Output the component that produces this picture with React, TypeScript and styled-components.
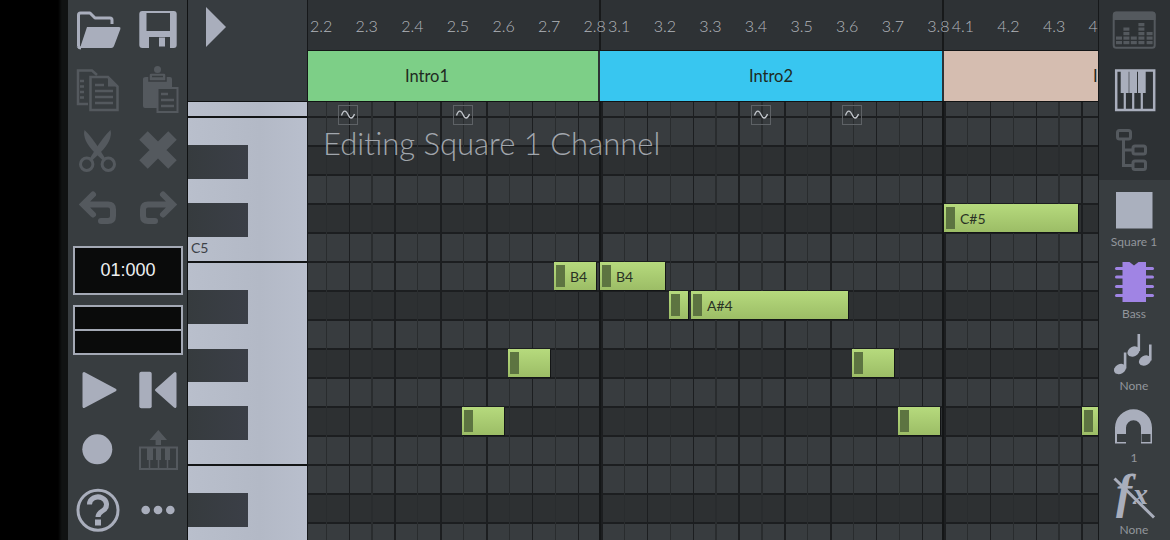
import React from "react";
import styled, { createGlobalStyle } from "styled-components";

const ICON = "#a9aebc";
const DIM = "#54595e";
const SIDE_BG = "#383d40";
const STEP = 22.9;

const GlobalStyle = createGlobalStyle`
  html, body {
    margin: 0;
    padding: 0;
    background: #000;
    overflow: hidden;
  }
  body {
    font-family: "Lato", "Noto Sans", sans-serif;
  }
`;

const PageEl = styled.div`
  display: flex;
  width: 1170px;
  height: 540px;
  overflow: hidden;
`;

const GutterEl = styled.div`
  width: 68px;
  flex: none;
  background: linear-gradient(90deg, #000 0, #000 58px, #101212 62px);
`;

const ToolbarEl = styled.div`
  width: 119px;
  flex: none;
  background: ${SIDE_BG};
  border-right: 1px solid #101213;
  display: flex;
  flex-direction: column;
`;

const ToolGridEl = styled.div`
  display: grid;
  grid-template-columns: 60px 60px;
  grid-auto-rows: 60px;
  width: 120px;
`;

const ToolIconEl = styled.svg`
  display: block;
  width: 60px;
  height: 60px;
`;

const TimerEl = styled.div`
  box-sizing: border-box;
  margin: 6px 0 0 5px;
  width: 110px;
  height: 49px;
  background: #0a0b0b;
  border: 2px solid #a4a9b5;
  color: #eef0f2;
  font-family: "Liberation Sans", sans-serif;
  font-size: 18px;
  display: flex;
  align-items: center;
  justify-content: center;
`;

const MeterEl = styled.div`
  box-sizing: border-box;
  margin: 10px 0 5px 5px;
  width: 110px;
  height: 50px;
  background: #0a0b0b;
  border: 2px solid #a4a9b5;
  display: flex;
  flex-direction: column;
  &::after {
    content: "";
    margin-top: 22px;
    height: 2px;
    background: #a4a9b5;
  }
`;

const EditorEl = styled.div`
  flex: 1;
  min-width: 0;
  display: flex;
  flex-direction: column;
`;

const TopRowEl = styled.div`
  display: flex;
  height: 102px;
  flex: none;
`;

const CornerEl = styled.div`
  width: 120px;
  flex: none;
  background: #373c40;
  border-right: 1px solid #16181a;
  border-bottom: 1px solid #101213;
  box-sizing: border-box;
  height: 102px;
  svg {
    display: block;
    margin: 6px 0 0 17px;
  }
`;

const TimelineEl = styled.div`
  flex: 1;
  min-width: 0;
  position: relative;
  overflow: hidden;
  background: #2e3235;
`;

const TicksEl = styled.div`
  position: relative;
  z-index: 1;
  height: 51px;
  box-sizing: border-box;
  padding-left: 2px;
  display: flex;
  align-items: center;
  border-bottom: 1px solid #141617;
  overflow: hidden;
`;

const TickEl = styled.div<{ $narrow?: boolean }>`
  width: ${(p) => (p.$narrow ? 24.5 : 45.6)}px;
  flex: none;
  font-size: 16px;
  font-weight: 300;
  color: #b2b6bc;
  padding-top: 1px;
`;

const TimelineBarEl = styled.div<{ $left: number }>`
  position: absolute;
  top: 0;
  height: 51px;
  left: ${(p) => p.$left}px;
  width: 2px;
  background: #17191a;
`;

const PatternsEl = styled.div`
  display: flex;
  height: 50px;
  border-bottom: 1px solid #101213;
  margin-left: -52px;
`;

const PatternEl = styled.div<{ $color: string }>`
  flex: none;
  width: 342px;
  height: 50px;
  background: ${(p) => p.$color};
  margin-right: 2px;
  display: flex;
  align-items: center;
  justify-content: center;
  font-size: 16.5px;
  color: #1f2a22;
`;

const BodyRowEl = styled.div`
  flex: 1;
  min-height: 0;
  display: flex;
`;

const PianoEl = styled.div`
  width: 119px;
  flex: none;
  display: flex;
  flex-direction: column;
  background: linear-gradient(90deg, #b9bfcc 0, #b3b9c6 60%, #b9bfcd 100%);
  border-right: 1px solid #16181a;
`;

const KeySpanEl = styled.div<{ $height: number; $black?: boolean; $octave?: boolean }>`
  flex: none;
  box-sizing: border-box;
  height: ${(p) => p.$height}px;
  width: ${(p) => (p.$black ? "60px" : "100%")};
  background: ${(p) => (p.$black ? "linear-gradient(90deg, #363b3e, #3b3f47)" : "transparent")};
  border-bottom: ${(p) => (p.$octave ? "2px solid #131516" : "none")};
  color: #3c4147;
  font-size: 14px;
  padding: 0 0 5px 3px;
  display: flex;
  align-items: flex-end;
`;

const GridEl = styled.div`
  flex: 1;
  min-width: 0;
  position: relative;
  overflow: hidden;
  display: flex;
  flex-direction: column;
`;

const GridRowEl = styled.div<{ $height: number; $dark: boolean }>`
  flex: none;
  box-sizing: border-box;
  height: ${(p) => p.$height}px;
  background: ${(p) => (p.$dark ? "#2d3032" : "#383c3f")};
  border-bottom: 2px solid #1c1e20;
`;

const BarsEl = styled.div`
  position: absolute;
  inset: 0;
  display: flex;
  margin-left: -53px;
`;

const BarEl = styled.div`
  flex: none;
  box-sizing: border-box;
  width: ${STEP * 15}px;
  background: repeating-linear-gradient(
    90deg,
    #1c1e20 0,
    #1c1e20 1.6px,
    transparent 1.6px,
    transparent ${STEP}px,
    #292c2e ${STEP}px,
    #292c2e ${STEP + 1.2}px,
    transparent ${STEP + 1.2}px,
    transparent ${STEP * 2}px
  );
  border-left: 2px solid #141617;
`;

const WaveEl = styled.svg`
  position: absolute;
  top: 3px;
  width: 20px;
  height: 20px;
`;

const NoteEl = styled.div`
  position: absolute;
  box-sizing: border-box;
  height: 28px;
  background: linear-gradient(180deg, #b6da7d, #9cbd66);
  box-shadow: 1px 1px 0 #131516;
  color: #2a3225;
  font-size: 14px;
  display: flex;
  align-items: center;
  padding-left: 2px;
  overflow: hidden;
`;

const NoteHandleEl = styled.div`
  flex: none;
  width: 9px;
  height: 22px;
  background: #5d7441;
  margin-right: 5px;
`;

const OverlayTitleEl = styled.div`
  position: absolute;
  left: 15px;
  top: 22px;
  font-size: 31px;
  font-weight: 300;
  color: #aeb3ba;
  white-space: nowrap;
  opacity: 0.9;
`;

const SidePanelEl = styled.div`
  width: 72px;
  flex: none;
  box-sizing: border-box;
  border-left: 1px solid #16181a;
  display: flex;
  flex-direction: column;
  background: ${SIDE_BG};
`;

const SideTopEl = styled.div`
  height: 180px;
  flex: none;
  background: #2d3134;
  svg {
    display: block;
    margin-left: -1px;
  }
`;

const SideItemEl = styled.div`
  height: 72px;
  flex: none;
  display: flex;
  flex-direction: column;
  align-items: center;
  svg {
    display: block;
    margin-left: -1px;
    flex: none;
    overflow: visible;
  }
`;

const SideLabelEl = styled.div`
  height: 16px;
  line-height: 16px;
  font-size: 12px;
  font-weight: 400;
  color: #92969c;
  margin-left: -1px;
`;

const OpenIcon = () => (
  <ToolIconEl viewBox="0 0 60 60">
    <path d="M10.5 46V15q0-2 2-2H22l5 5h15q2 0 2 2v4" fill="none" stroke={ICON} strokeWidth="3" strokeLinejoin="round" />
    <path d="M19 27H51q2 0 1.4 2L46 46q-.7 2-2.7 2H12z" fill={ICON} />
    <path d="M10 46q1 2 3 2" fill="none" stroke={ICON} strokeWidth="3" />
  </ToolIconEl>
);

const SaveIcon = () => (
  <ToolIconEl viewBox="0 0 60 60">
    <rect x="11.3" y="11" width="37.4" height="37" rx="3" fill={ICON} />
    <rect x="18.5" y="13" width="23.5" height="18" fill={SIDE_BG} />
    <rect x="21" y="37" width="21" height="11" fill={SIDE_BG} />
    <rect x="31" y="37.5" width="6" height="9" fill={ICON} />
  </ToolIconEl>
);

const CopyIcon = () => (
  <ToolIconEl viewBox="0 0 60 60">
    <path d="M20 44H10V10.5H24L29 15" fill="none" stroke={DIM} strokeWidth="2.5" />
    <path d="M12 21h4M12 26.5h4M12 32h4M12 37.5h4" stroke={DIM} strokeWidth="2.5" />
    <path d="M22.5 17H40l9.5 9.5V50H22.5z" fill="none" stroke={DIM} strokeWidth="2.5" />
    <path d="M40 17v9.5h9.5z" fill={DIM} />
    <path d="M27 25h9M27 31h18M27 37h18M27 43h18" stroke={DIM} strokeWidth="2.5" />
  </ToolIconEl>
);

const PasteIcon = () => (
  <ToolIconEl viewBox="0 0 60 60">
    <path d="M18 17h24q2 0 2 2V27H29V48H17q-2 0-2-2V19q0-2 3-2z" fill={DIM} />
    <path d="M21 21V15q0-2 2-2H36q2 0 2 2V21z" fill={DIM} stroke={SIDE_BG} strokeWidth="1.5" />
    <circle cx="29.5" cy="9.5" r="3.5" fill={DIM} />
    <path d="M24 16.5H35" stroke={SIDE_BG} strokeWidth="1.5" />
    <rect x="29.5" y="28" width="20" height="24" fill="none" stroke={DIM} strokeWidth="2" />
    <path d="M33 34h7M33 40h13M33 46h13" stroke={DIM} strokeWidth="2.5" />
  </ToolIconEl>
);

const CutIcon = () => (
  <ToolIconEl viewBox="0 0 60 60">
    <circle cx="18.7" cy="44.3" r="6.2" fill="none" stroke={DIM} strokeWidth="3" />
    <circle cx="40.3" cy="44.3" r="6.2" fill="none" stroke={DIM} strokeWidth="3" />
    <path d="M16.5 10Q23 16 32 30L37.5 39L35 40.5L27 33Q14 20 16.5 10z" fill={DIM} />
    <path d="M42.5 10Q36 16 27 30L21.5 39L24 40.5L32 33Q45 20 42.5 10z" fill={DIM} />
  </ToolIconEl>
);

const DeleteIcon = () => (
  <ToolIconEl viewBox="0 0 60 60">
    <path d="M15.5 15.5L44.5 44.5M44.5 15.5L15.5 44.5" stroke={DIM} strokeWidth="12" />
  </ToolIconEl>
);

const undoPath = "M25 14.5L15 24.5L25 34.5M16 24.5H40q5 0 5 5V36q0 5-5 5H33";

const UndoIcon = () => (
  <ToolIconEl viewBox="0 0 60 60">
    <path d={undoPath} fill="none" stroke={DIM} strokeWidth="6" strokeLinecap="round" />
  </ToolIconEl>
);

const RedoIcon = () => (
  <ToolIconEl viewBox="0 0 60 60">
    <path d={undoPath} transform="matrix(-1 0 0 1 60 0)" fill="none" stroke={DIM} strokeWidth="6" strokeLinecap="round" />
  </ToolIconEl>
);

const PlayIcon = () => (
  <ToolIconEl viewBox="0 0 60 60">
    <path d="M16 13.5L47 30L16 46.5z" fill={ICON} stroke={ICON} strokeWidth="3" strokeLinejoin="round" />
  </ToolIconEl>
);

const RewindIcon = () => (
  <ToolIconEl viewBox="0 0 60 60">
    <rect x="11.3" y="11.7" width="12.4" height="36.6" rx="2" fill={ICON} />
    <path d="M47 13.5L28.5 30L47 46.5z" fill={ICON} stroke={ICON} strokeWidth="3" strokeLinejoin="round" />
  </ToolIconEl>
);

const RecordIcon = () => (
  <ToolIconEl viewBox="0 0 60 60">
    <circle cx="29.3" cy="29.3" r="15" fill={ICON} />
  </ToolIconEl>
);

const MidiIcon = () => (
  <ToolIconEl viewBox="0 0 60 60">
    <path d="M30.3 10L39 20H33V25H27.6V20H21.6z" fill={DIM} />
    <rect x="12" y="27.5" width="37" height="21.5" fill="none" stroke={DIM} strokeWidth="2" />
    <path d="M19 28h6v12h-6zM28 28h5v12h-5zM37 28h5v12h-5z" fill={DIM} />
    <path d="M21.5 40v8M30.5 40v8M39.5 40v8" stroke={DIM} strokeWidth="1.5" />
  </ToolIconEl>
);

const HelpIcon = () => (
  <ToolIconEl viewBox="0 0 60 60">
    <circle cx="30" cy="30.2" r="20" fill="none" stroke={ICON} strokeWidth="3" />
    <path d="M21.5 24.5a8.5 7.5 0 1 1 13.5 6c-3 2-5 3-5 6.5" fill="none" stroke={ICON} strokeWidth="5" />
    <rect x="27" y="39.5" width="6" height="6" fill={ICON} />
  </ToolIconEl>
);

const MoreIcon = () => (
  <ToolIconEl viewBox="0 0 60 60">
    <circle cx="17.7" cy="30" r="4.3" fill={ICON} />
    <circle cx="30" cy="30" r="4.3" fill={ICON} />
    <circle cx="42.3" cy="30" r="4.3" fill={ICON} />
  </ToolIconEl>
);

const eqColumns = [
  { x: 18, top: 36 },
  { x: 25.4, top: 27 },
  { x: 32.8, top: 36 },
  { x: 40.4, top: 22.5 },
  { x: 48.6, top: 31.5 },
];

const EqIcon = () => (
  <svg width="72" height="60" viewBox="0 0 72 60">
    <rect x="15.7" y="12.7" width="41" height="35" rx="2.5" fill="none" stroke={DIM} strokeWidth="2" />
    <path d="M15 14.5q0-3 3-3H54.5q3 0 3 3V20H15z" fill={DIM} />
    {eqColumns.map((col) => {
      const segs: number[] = [];
      for (let y = 41; y >= col.top; y -= 4.5) segs.push(y);
      return segs.map((y) => <rect key={`${col.x}-${y}`} x={col.x} y={y} width="6" height="3.2" fill={DIM} />);
    })}
  </svg>
);

const KeysIcon = () => (
  <svg width="72" height="60" viewBox="0 0 72 60">
    <rect x="18.2" y="10.5" width="38" height="39.5" fill="none" stroke={ICON} strokeWidth="2.5" />
    <path d="M22.7 11h8v22h-8zM31.3 11h7.7v22h-7.7zM40 11h7.7v22H40z" fill={ICON} />
    <path d="M26.8 33V50M35.2 33V50M43.8 33V50" stroke={ICON} strokeWidth="2.2" />
  </svg>
);

const TreeIcon = () => (
  <svg width="72" height="60" viewBox="0 0 72 60">
    <g fill="none" stroke={DIM} strokeWidth="3">
      <rect x="19.5" y="10.5" width="13" height="8.5" rx="2" />
      <rect x="35" y="26" width="12.5" height="8" rx="2" />
      <rect x="35" y="41" width="12.5" height="8.5" rx="2" />
      <path d="M25.5 19V45.5H35M25.5 30H35" />
    </g>
  </svg>
);

const SquareIcon = () => (
  <svg width="72" height="54" viewBox="0 0 72 54">
    <rect x="18" y="12" width="36.5" height="36.5" fill="#aab0be" />
  </svg>
);

const ChipIcon = () => (
  <svg width="72" height="54" viewBox="0 0 72 54">
    <path d="M24.5 10H31.5L36 13.5L40.5 10H48V50H24.5z" fill="#a084e4" />
    {[16.5, 25, 34.5, 43.5].map((y) => (
      <path key={y} d={`M18.5 ${y}H54.5`} stroke="#a084e4" strokeWidth="3" strokeLinecap="round" />
    ))}
  </svg>
);

const NotesIcon = () => (
  <svg width="72" height="54" viewBox="0 0 72 54">
    <g fill={ICON}>
      <ellipse cx="22" cy="45" rx="6.4" ry="4.8" transform="rotate(-28 22 45)" />
      <rect x="25.8" y="28.5" width="2.6" height="16" />
      <ellipse cx="35.5" cy="27.5" rx="6.4" ry="4.8" transform="rotate(-28 35.5 27.5)" />
      <rect x="39.5" y="10" width="2.6" height="17" />
      <ellipse cx="47" cy="36.5" rx="6.4" ry="4.8" transform="rotate(-28 47 36.5)" />
      <rect x="51" y="20.5" width="2.6" height="16" />
    </g>
  </svg>
);

const MagnetIcon = () => (
  <svg width="72" height="54" viewBox="0 0 72 54">
    <path d="M17 47.5V31.8A18.5 18.5 0 0 1 54 31.8V47.5H43V31.8A7.5 7.5 0 0 0 28 31.8V47.5z" fill={ICON} />
    <rect x="19" y="38" width="9" height="8" fill={SIDE_BG} />
    <rect x="43.5" y="38" width="9" height="8" fill={SIDE_BG} />
  </svg>
);

const FxIcon = () => (
  <svg width="72" height="54" viewBox="0 0 72 54">
    <text x="18" y="40" fill={ICON} fontFamily="Liberation Serif, serif" fontStyle="italic" fontWeight="700" fontSize="48">
      f
      <tspan fontSize="30" dx="1" dy="-4">
        x
      </tspan>
    </text>
    <path d="M16.5 10.5L56 49.5" stroke={ICON} strokeWidth="3" />
  </svg>
);

const tickLabels = ["2.2", "2.3", "2.4", "2.5", "2.6", "2.7", "2.8", "3.1", "3.2", "3.3", "3.4", "3.5", "3.6", "3.7", "3.8", "4.1", "4.2", "4.3", "4.4"];

const pianoKeys = [
  { h: 16, octave: true },
  { h: 27 },
  { h: 34, black: true },
  { h: 24 },
  { h: 34, black: true },
  { h: 26, octave: true, label: "C5" },
  { h: 27 },
  { h: 34, black: true },
  { h: 25 },
  { h: 33, black: true },
  { h: 24 },
  { h: 34, black: true },
  { h: 26, octave: true },
  { h: 27 },
  { h: 34, black: true },
  { h: 13 },
];

const notes = [
  { x: 636, row: 4, w: 134, label: "C#5" },
  { x: 246, row: 6, w: 42, label: "B4" },
  { x: 292, row: 6, w: 65, label: "B4" },
  { x: 361, row: 7, w: 19 },
  { x: 383, row: 7, w: 157, label: "A#4" },
  { x: 200, row: 9, w: 42 },
  { x: 544, row: 9, w: 42 },
  { x: 154, row: 11, w: 42 },
  { x: 590, row: 11, w: 42 },
  { x: 774, row: 11, w: 20 },
];

const waves = [30, 145, 443, 534];

// rows under a black key are the darker ones
const darkRows = [2, 4, 7, 9, 11, 14];
const rows = Array.from({ length: 16 }, (_, i) => i);

export default function App() {
  return (
    <PageEl>
      <GlobalStyle />
      <GutterEl />
      <ToolbarEl>
        <ToolGridEl>
          <OpenIcon />
          <SaveIcon />
          <CopyIcon />
          <PasteIcon />
          <CutIcon />
          <DeleteIcon />
          <UndoIcon />
          <RedoIcon />
        </ToolGridEl>
        <TimerEl>01:000</TimerEl>
        <MeterEl />
        <ToolGridEl>
          <PlayIcon />
          <RewindIcon />
          <RecordIcon />
          <MidiIcon />
          <HelpIcon />
          <MoreIcon />
        </ToolGridEl>
      </ToolbarEl>
      <EditorEl>
        <TopRowEl>
          <CornerEl>
            <svg width="22" height="42" viewBox="0 0 22 42">
              <path d="M1 1L21 21L1 41z" fill={ICON} />
            </svg>
          </CornerEl>
          <TimelineEl>
            <TicksEl>
              {tickLabels.map((t) => (
                <TickEl key={t} $narrow={t === "2.8" || t === "3.8"}>
                  {t}
                </TickEl>
              ))}
            </TicksEl>
            <TimelineBarEl $left={291} />
            <TimelineBarEl $left={634} />
            <PatternsEl>
              <PatternEl $color="#7dcf87">Intro1</PatternEl>
              <PatternEl $color="#38c6f0">Intro2</PatternEl>
              <PatternEl $color="#d5bdb0">Intro3</PatternEl>
            </PatternsEl>
          </TimelineEl>
        </TopRowEl>
        <BodyRowEl>
          <PianoEl>
            {pianoKeys.map((key, i) => (
              <KeySpanEl key={i} $height={key.h} $black={key.black} $octave={key.octave}>
                {key.label}
              </KeySpanEl>
            ))}
          </PianoEl>
          <GridEl>
            {rows.map((i) => (
              <GridRowEl key={i} $height={i === 0 ? 16 : 29} $dark={darkRows.includes(i)} />
            ))}
            <BarsEl>
              <BarEl />
              <BarEl />
              <BarEl />
            </BarsEl>
            {waves.map((x) => (
              <WaveEl key={x} viewBox="0 0 20 20" style={{ left: x }}>
                <rect x="0.5" y="0.5" width="19" height="19" fill="none" stroke="#5e6266" />
                <path d="M3.5 10.5C5.5 4.5 8 5 10 9.5S14.5 14.5 16.5 9" fill="none" stroke="#c2c6cc" strokeWidth="1.3" />
              </WaveEl>
            ))}
            <OverlayTitleEl>Editing Square 1 Channel</OverlayTitleEl>
            {notes.map((n) => (
              <NoteEl key={`${n.x}-${n.row}`} style={{ left: n.x, top: 15 + (n.row - 1) * 29, width: n.w }}>
                <NoteHandleEl />
                {n.label}
              </NoteEl>
            ))}
          </GridEl>
        </BodyRowEl>
      </EditorEl>
      <SidePanelEl>
        <SideTopEl>
          <EqIcon />
          <KeysIcon />
          <TreeIcon />
        </SideTopEl>
        <SideItemEl>
          <SquareIcon />
          <SideLabelEl>Square 1</SideLabelEl>
        </SideItemEl>
        <SideItemEl>
          <ChipIcon />
          <SideLabelEl>Bass</SideLabelEl>
        </SideItemEl>
        <SideItemEl>
          <NotesIcon />
          <SideLabelEl>None</SideLabelEl>
        </SideItemEl>
        <SideItemEl>
          <MagnetIcon />
          <SideLabelEl>1</SideLabelEl>
        </SideItemEl>
        <SideItemEl>
          <FxIcon />
          <SideLabelEl>None</SideLabelEl>
        </SideItemEl>
      </SidePanelEl>
    </PageEl>
  );
}
